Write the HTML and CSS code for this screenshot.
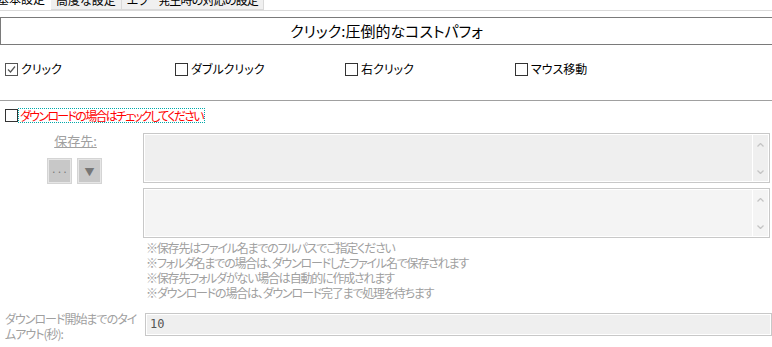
FILE: index.html
```html
<!DOCTYPE html>
<html lang="ja">
<head>
  <meta charset="UTF-8">
  <title>設定</title>
  <link rel="stylesheet" href="styles.css">
</head>
<body>
  <div class="tabs">
    <div class="tab active">基本設定</div>
    <div class="tab">高度な設定</div>
    <div class="tab wide">エラー発生時の対応の設定</div>
  </div>

  <div class="page">
    <div class="title-box">クリック:圧倒的なコストパフォ</div>

    <div class="checks">
      <label class="check"><span class="box checked"><svg viewBox="0 0 11 11" width="11" height="11"><path d="M2 5.5 L4.5 8 L9 2.5" fill="none" stroke="#555" stroke-width="1.2"/></svg></span>クリック</label>
      <label class="check"><span class="box"></span>ダブルクリック</label>
      <label class="check"><span class="box"></span>右クリック</label>
      <label class="check"><span class="box"></span>マウス移動</label>
    </div>

    <hr class="sep">

    <label class="check download"><span class="box"></span><span class="focus">ダウンロードの場合はチェックしてください</span></label>

    <div class="save-row">
      <div class="save-left">
        <div class="save-label">保存先:</div>
        <div class="save-buttons">
          <span class="btn">···</span>
          <span class="btn">▼</span>
        </div>
      </div>
      <div class="save-right">
        <div class="area">
          <div class="area-body"></div>
          <div class="scroll">
            <svg viewBox="0 0 7 4" width="7" height="4"><path d="M0.5 3.5 L3.5 0.5 L6.5 3.5" fill="none" stroke="#c4c4c4" stroke-width="1.3"/></svg>
            <svg viewBox="0 0 7 4" width="7" height="4"><path d="M0.5 0.5 L3.5 3.5 L6.5 0.5" fill="none" stroke="#c4c4c4" stroke-width="1.3"/></svg>
          </div>
        </div>
        <div class="area light">
          <div class="area-body"></div>
          <div class="scroll">
            <svg viewBox="0 0 7 4" width="7" height="4"><path d="M0.5 3.5 L3.5 0.5 L6.5 3.5" fill="none" stroke="#c4c4c4" stroke-width="1.3"/></svg>
            <svg viewBox="0 0 7 4" width="7" height="4"><path d="M0.5 0.5 L3.5 3.5 L6.5 0.5" fill="none" stroke="#c4c4c4" stroke-width="1.3"/></svg>
          </div>
        </div>
        <div class="notes">
          <p>※保存先はファイル名までのフルパスでご指定ください</p>
          <p>※フォルダ名までの場合は、ダウンロードしたファイル名で保存されます</p>
          <p>※保存先フォルダがない場合は自動的に作成されます</p>
          <p>※ダウンロードの場合は、ダウンロード完了まで処理を待ちます</p>
        </div>
      </div>
    </div>

    <div class="timeout-row">
      <div class="timeout-label">ダウンロード開始までのタイムアウト(秒):</div>
      <div class="timeout-input">10</div>
    </div>
  </div>
</body>
</html>
```

FILE: styles.css
```css
* { margin: 0; padding: 0; box-sizing: border-box; }
body { width: 772px; height: 347px; overflow: hidden; background: #fff; font-family: "Noto Sans CJK JP", "Noto Sans", sans-serif; font-size: 12px; font-feature-settings: "palt"; color: #000; }

.tabs { display: flex; height: 11px; overflow: hidden; border-bottom: 1px solid #dadada; }
.tab { height: 22px; margin-top: -12px; padding: 3px 5px 0; line-height: 16px; background: #f0f0f0; border: 1px solid #d9d9d9; border-left: none; white-space: nowrap; }
.tab.active { background: #fff; border: none; margin-left: -8px; padding-right: 6px; }
.tab.wide { letter-spacing: -0.8px; }

.page { padding-top: 6px; }
.title-box { height: 28px; width: 772px; border: 1px solid #7a7a7a; border-right: none; text-align: center; font-size: 15px; line-height: 26px; }

.checks { display: grid; grid-template-columns: repeat(4, 170px); padding: 17px 0 0 5px; height: 55px; }
.check { display: flex; align-items: center; gap: 3px; height: 14px; line-height: 14px; }
.box { width: 13px; height: 13px; border: 1px solid #333; display: flex; align-items: center; justify-content: center; background: #fff; flex: none; }
.box.checked { border-color: #555; }

.sep { border: none; border-top: 1px solid #a0a0a0; height: 0; }

.download { margin: 7px 0 0 5px; gap: 1px; }
.download .focus { color: #ff0000; outline: 1px dotted #0aa; outline-offset: 0; padding: 0 1px; line-height: 13px; letter-spacing: -1.7px; }

.save-row { display: flex; margin-top: 11px; }
.save-left { width: 143px; flex: none; display: flex; flex-direction: column; align-items: center; }
.save-label { color: #a0a0a0; text-decoration: underline; font-size: 13px; line-height: 15px; margin-left: 8px; }
.save-buttons { display: flex; gap: 7px; margin-top: 11px; margin-left: 6px; }
.btn { width: 23px; height: 24px; background: #c8c8c8; border: 1px solid #e6e6e6; outline: 1px solid #d4d4d4; color: #777; display: flex; align-items: center; justify-content: center; font-size: 10px; }

.save-right { flex: none; width: 627px; }
.area { height: 50px; border: 1px solid #c8c8c8; display: flex; background: #fff; padding: 1px; margin-bottom: 5px; }
.area-body { flex: 1; background: #efefef; }
.area.light .area-body { background: #f4f4f4; }
.scroll { width: 15px; margin-left: 1px; background: #efefef; display: flex; flex-direction: column; justify-content: space-between; align-items: center; padding: 8px 0 7px; }
.area.light .scroll { background: #f4f4f4; }

.notes { color: #a0a0a0; padding: 0 0 0 3px; margin-top: -3px; }
.notes p { line-height: 15px; font-size: 12px; letter-spacing: -1.2px; }

.timeout-row { display: flex; margin-top: 13px; }
.timeout-label { width: 145px; flex: none; padding-left: 5px; padding-right: 8px; color: #a0a0a0; line-height: 15px; margin-top: -2px; letter-spacing: -1px; word-break: break-all; }
.timeout-input { width: 640px; height: 23px; border: 1px solid #c8c8c8; background: #efefef; box-shadow: inset 0 0 0 1px #fff; font-family: "DejaVu Sans Mono", monospace; font-size: 12px; color: #555; line-height: 21px; padding-left: 4px; }
```
